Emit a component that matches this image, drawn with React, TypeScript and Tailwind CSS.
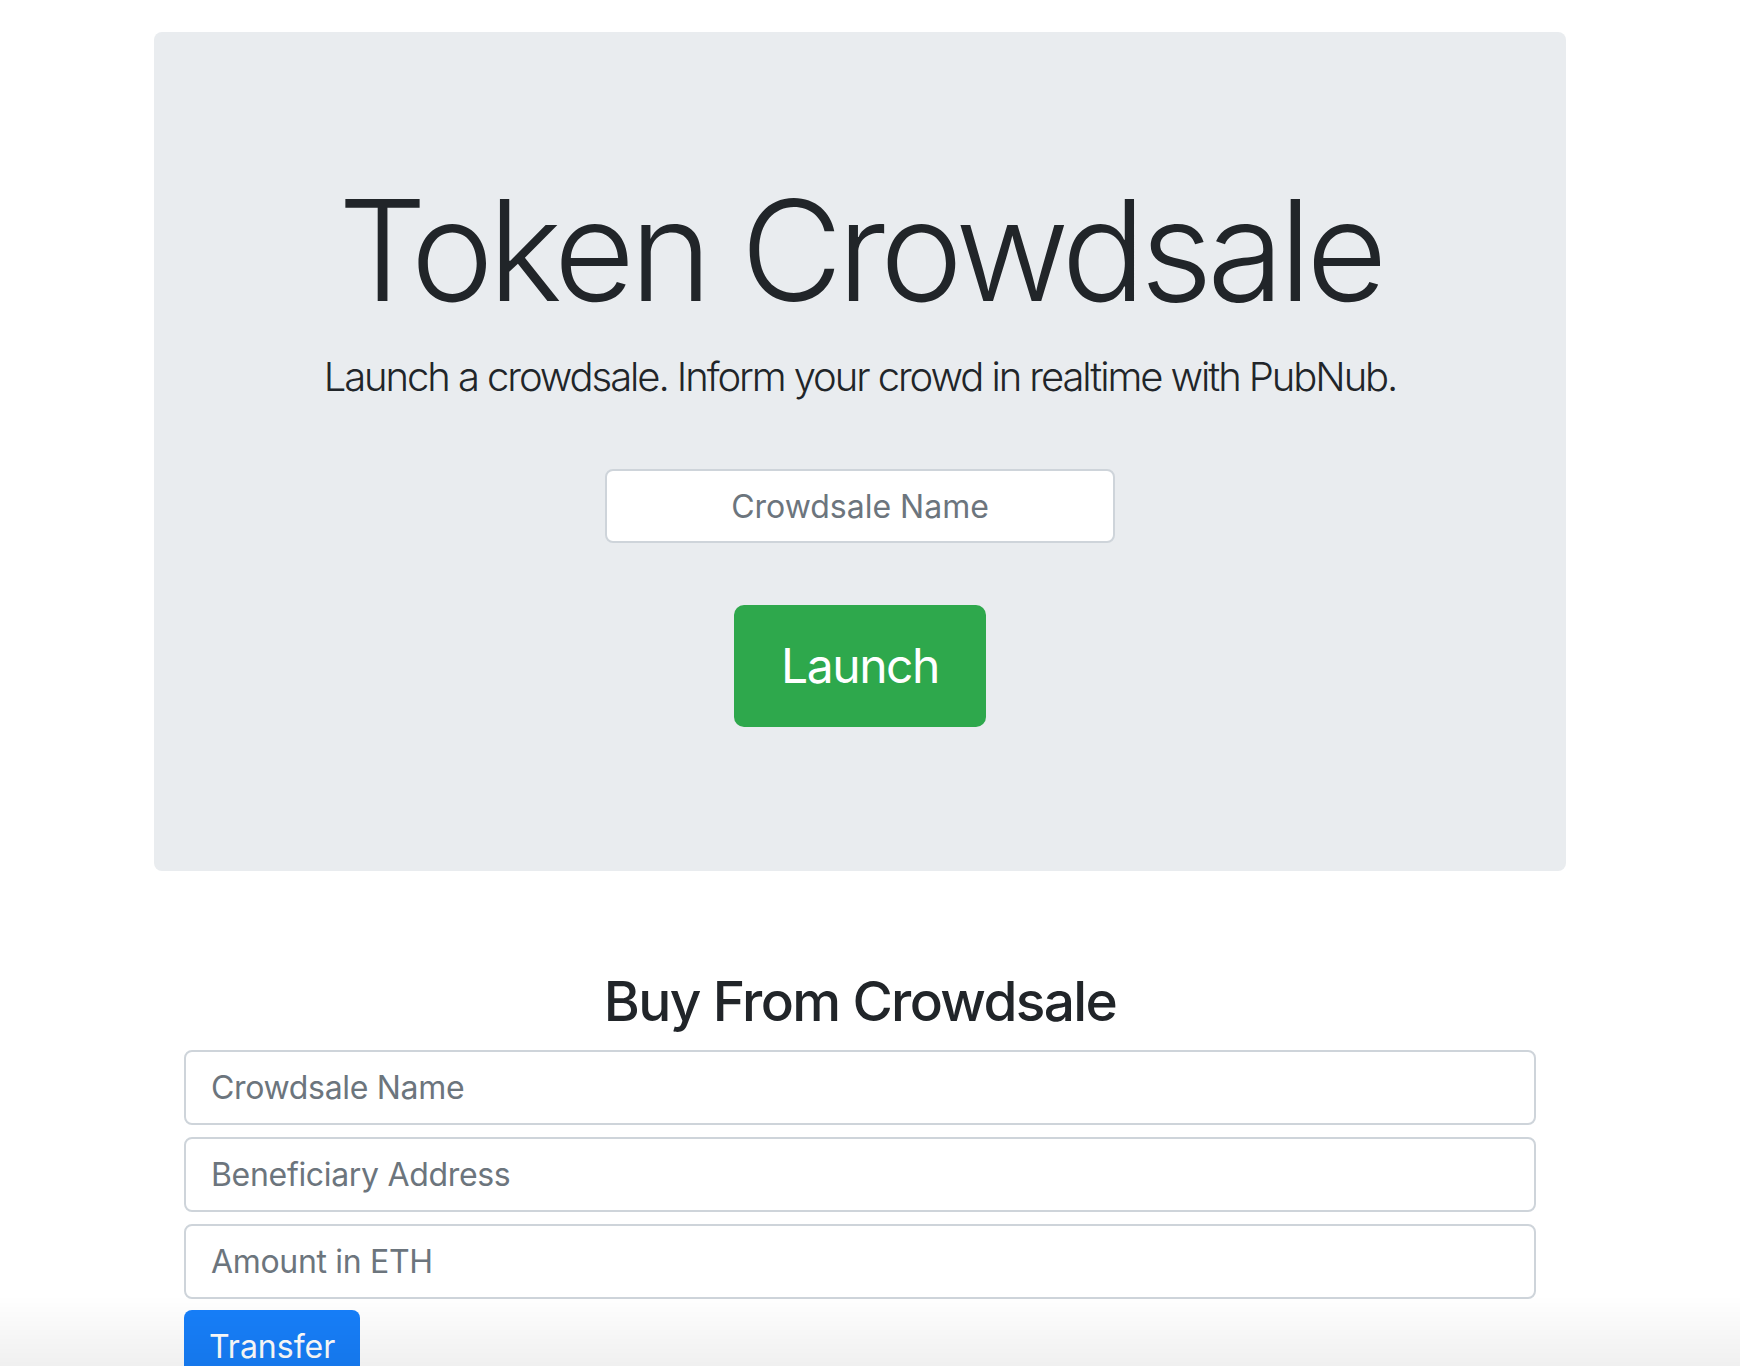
import React from 'react';

const fields = ['Crowdsale Name', 'Beneficiary Address', 'Amount in ETH'];

export default function App() {
  return (
    <div className="relative min-h-screen bg-white text-[#212529] font-['Inter','Liberation_Sans',sans-serif]">
      <div className="ml-[154px] w-[1412px] pt-[32px]">
        {/* jumbotron */}
        <section className="flex h-[839px] flex-col items-center rounded-[8px] bg-[#e9ecef] pt-[148px]">
          <h1 className="text-[140px] font-light leading-none tracking-[-0.038em]">Token Crowdsale</h1>
          <p className="mt-[37px] text-[40px] font-light leading-none tracking-[-0.052em]">
            Launch a crowdsale. Inform your crowd in realtime with PubNub.
          </p>
          <input
            type="text"
            placeholder="Crowdsale Name"
            className="mt-[72px] h-[74px] w-[510px] rounded-[8px] border-2 border-[#ced4da] bg-white px-[24px] text-center text-[32px] outline-none placeholder:text-[#6c757d]"
          />
          <button className="mt-[62px] h-[122px] w-[252px] rounded-[10px] bg-[#2ea84c] text-[48px] font-normal tracking-[-0.03em] text-white">
            Launch
          </button>
        </section>

        <div className="mt-[103px] px-[30px]">
          <h2 className="text-center text-[55px] font-medium leading-none tracking-[-0.03em]">Buy From Crowdsale</h2>
          <div className="mt-[21px] flex flex-col gap-[12px]">
            {fields.map((f) => (
              <input
                key={f}
                type="text"
                placeholder={f}
                className="h-[75px] w-full rounded-[8px] border-2 border-[#ced4da] bg-white px-[25px] text-[32px] tracking-[-0.01em] outline-none placeholder:text-[#6c757d]"
              />
            ))}
          </div>
          <button className="mt-[11px] h-[74px] rounded-[8px] bg-[#177ffa] px-[25px] text-[32px] leading-[48px] text-white">
            Transfer
          </button>
        </div>
      </div>
      <div className="pointer-events-none fixed inset-x-0 bottom-0 h-[70px] bg-linear-to-b from-transparent to-black/[0.06]" />
    </div>
  );
}
